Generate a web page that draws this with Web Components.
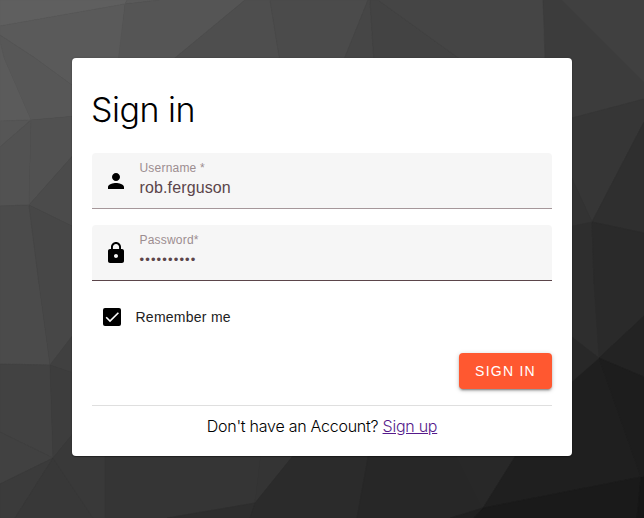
<!DOCTYPE html>
<html lang="en">
<head>
<meta charset="utf-8">
<title>Sign in</title>
<style>
html,body{margin:0;height:100%;overflow:hidden;background:#333}
body{font-family:"Liberation Sans",Arial,sans-serif}
</style>
</head>
<body>
<login-page>
  <sign-card>
    <text-field label="Username *" value="rob.ferguson" style="--line:#a5979a">
      <svg slot="icon" width="24" height="24" viewBox="0 0 24 24"><path d="M12 12c2.21 0 4-1.79 4-4s-1.79-4-4-4-4 1.79-4 4 1.79 4 4 4zm0 2c-2.67 0-8 1.34-8 4v2h16v-2c0-2.66-5.33-4-8-4z"/></svg>
    </text-field>
    <text-field label="Password*" value="••••••••••" secret>
      <svg slot="icon" width="24" height="24" viewBox="0 0 24 24"><path d="M18 8h-1V6c0-2.76-2.24-5-5-5S7 3.24 7 6v2H6c-1.1 0-2 .9-2 2v10c0 1.1.9 2 2 2h12c1.1 0 2-.9 2-2V10c0-1.1-.9-2-2-2zm-6 9c-1.1 0-2-.9-2-2s.9-2 2-2 2 .9 2 2-.9 2-2 2zm3.1-9H8.9V6c0-1.71 1.39-3.1 3.1-3.1s3.1 1.39 3.1 3.1v2z"/></svg>
    </text-field>
    <check-option>Remember me</check-option>
    <action-button>SIGN IN</action-button>
    <sign-up-note></sign-up-note>
  </sign-card>
</login-page>
<script>
function define(name, html) {
  const t = document.createElement('template');
  t.innerHTML = html;
  customElements.define(name, class extends HTMLElement {
    constructor() {
      super();
      this.attachShadow({mode: 'open'}).append(t.content.cloneNode(true));
    }
    connectedCallback() {
      this.shadowRoot.querySelectorAll('[data-attr]').forEach(n => {
        n.textContent = this.getAttribute(n.dataset.attr);
      });
    }
  });
}

// Low-poly backdrop facets: grey level, then the outline points.
const facets = [
  ['5f', '0,0 127,0 125,4 0,26'],
  ['5a', '127,0 160,0 125,4'],
  ['5a', '0,26 125,4 119,60 72,85 35,58 0,35'],
  ['55', '125,4 160,0 245,0 175,58 173,62 118,62'],
  ['4e', '245,0 270,0 280,62 170,62'],
  ['4b', '270,0 368,0 343,62 280,62'],
  ['46', '368,0 370,0 374,62 343,62'],
  ['43', '370,0 378,0 464,62 374,62'],
  ['45', '378,0 543,0 547,62 464,62'],
  ['3c', '543,0 562,0 644,82 644,99 572,118 547,118'],
  ['40', '562,0 644,0 644,82'],
  ['57', '0,35 35,58 72,85 76,116 31,120 4,58 0,42'],
  ['5b', '0,42 4,58 31,120 0,121'],
  ['56', '0,121 31,120 0,147'],
  ['52', '0,147 31,120 29,205 0,206'],
  ['51', '31,120 76,116 76,152 29,205'],
  ['4b', '29,205 76,152 76,228'],
  ['4b', '0,206 29,205 39,284 50,365 0,364'],
  ['47', '29,205 76,228 76,331 50,365 39,284'],
  ['40', '50,365 76,331 76,374'],
  ['42', '0,364 50,365 53,458 0,432'],
  ['41', '0,432 53,458 0,484'],
  ['3d', '50,365 76,374 76,430 53,458'],
  ['3b', '0,484 53,458 15,518 0,518'],
  ['38', '15,518 53,458 93,518'],
  ['39', '53,458 76,430 105,452 105,518 93,518'],
  ['35', '105,452 261,452 255,503 167,518 105,518'],
  ['34', '261,452 296,452 255,503'],
  ['2e', '167,518 255,503 250,518'],
  ['2b', '255,503 296,452 369,452 357,518 250,518'],
  ['27', '369,452 455,452 483,508 450,518 357,518'],
  ['28', '455,452 518,452 483,508'],
  ['20', '450,518 483,508 474,518'],
  ['1f', '518,452 568,376 599,358 641,477 483,508'],
  ['1a', '483,508 641,477 637,518 474,518'],
  ['16', '641,477 644,476 644,518 637,518'],
  ['36', '568,119 644,99 644,122 592,222 568,170'],
  ['33', '568,170 592,222 568,227'],
  ['2f', '644,122 644,233 592,222'],
  ['2e', '568,227 592,222 594,284 599,358 568,334'],
  ['2a', '592,222 644,233 644,316 599,358 594,284'],
  ['28', '568,334 599,358 568,385'],
  ['23', '599,358 644,316 644,377'],
  ['1d', '599,358 644,377 644,476 641,477']
].map(([g, p]) => `<polygon points="${p}" fill="#${g}${g}${g}" stroke="#${g}${g}${g}" stroke-width=".5"/>`).join('');

define('login-page', `<style>
:host{display:grid;grid-template:100% / 100%;width:644px;height:518px}
svg,div{grid-area:1/1}
svg{display:block}
div{display:flex;justify-content:center;align-items:flex-start;padding-top:58px;z-index:1}
</style>
<svg width="644" height="518" viewBox="0 0 644 518">${facets}</svg>
<div><slot></slot></div>`);

define('sign-card', `<style>
:host{display:flex;flex-direction:column;box-sizing:border-box;width:500px;height:398px;padding:32px 20px 0;background:#fff;border-radius:4px;box-shadow:0 1px 1px rgba(0,0,0,.35),0 0 2px rgba(0,0,0,.25)}
h1{margin:0 0 23px -1px;height:40px;font:300 34px/40px Inter,sans-serif;letter-spacing:-.5px;color:#000;white-space:nowrap}
</style><h1>Sign in</h1><slot></slot>`);

define('text-field', `<style>
:host{display:flex;box-sizing:border-box;height:56px;margin-bottom:16px;padding-left:11.5px;background:#f6f6f6;border-bottom:1px solid var(--line,#5b454a);border-radius:4px 4px 0 0}
.icon{width:24px;margin:16px 12px 0 0;height:24px}
.text{display:flex;flex-direction:column;padding-top:8px}
.label{font-size:12px;line-height:15px;letter-spacing:.2px;color:#9c8d90}
.value{font-size:16px;line-height:24px;color:#5b454a;letter-spacing:.13px}
:host([secret]) .value{font-size:13px;line-height:23px;letter-spacing:1.15px}
</style><div class="icon"><slot name="icon"></slot></div>
<div class="text"><span class="label" data-attr="label"></span><span class="value" data-attr="value"></span></div>`);

define('check-option', `<style>
:host{display:flex;align-items:center;height:40px;padding-left:11px;gap:14.5px;font-size:14px;letter-spacing:.25px;color:#212121}
svg{display:block}
</style><svg width="18" height="18" viewBox="0 0 18 18"><rect width="18" height="18" rx="2"/><path d="M3.2 9.3 7 13.1 15.4 4.7" fill="none" stroke="#fff" stroke-width="1.6"/></svg><span><slot></slot></span>`);

define('action-button', `<style>
:host{display:flex;align-self:flex-end;align-items:center;justify-content:center;box-sizing:border-box;width:93px;height:36px;margin-top:16px;background:#ff5830;color:#fff;border-radius:4px;font:400 14px/36px "Liberation Sans",sans-serif;letter-spacing:1.25px;white-space:nowrap;box-shadow:0 3px 1px -2px rgba(0,0,0,.2),0 2px 2px rgba(0,0,0,.18),0 1px 5px rgba(0,0,0,.2)}
</style><slot></slot>`);

define('sign-up-note', `<style>
:host{display:block;margin-top:16px;border-top:1px solid #dfdfdf;padding-top:8px;text-align:center;font:300 16px/24px Inter,sans-serif;color:#000;letter-spacing:-.25px;white-space:nowrap}
a{color:#551a8b;text-decoration:underline}
</style>Don't have an Account? <a href="#">Sign up</a>`);
</script>
</body>
</html>
